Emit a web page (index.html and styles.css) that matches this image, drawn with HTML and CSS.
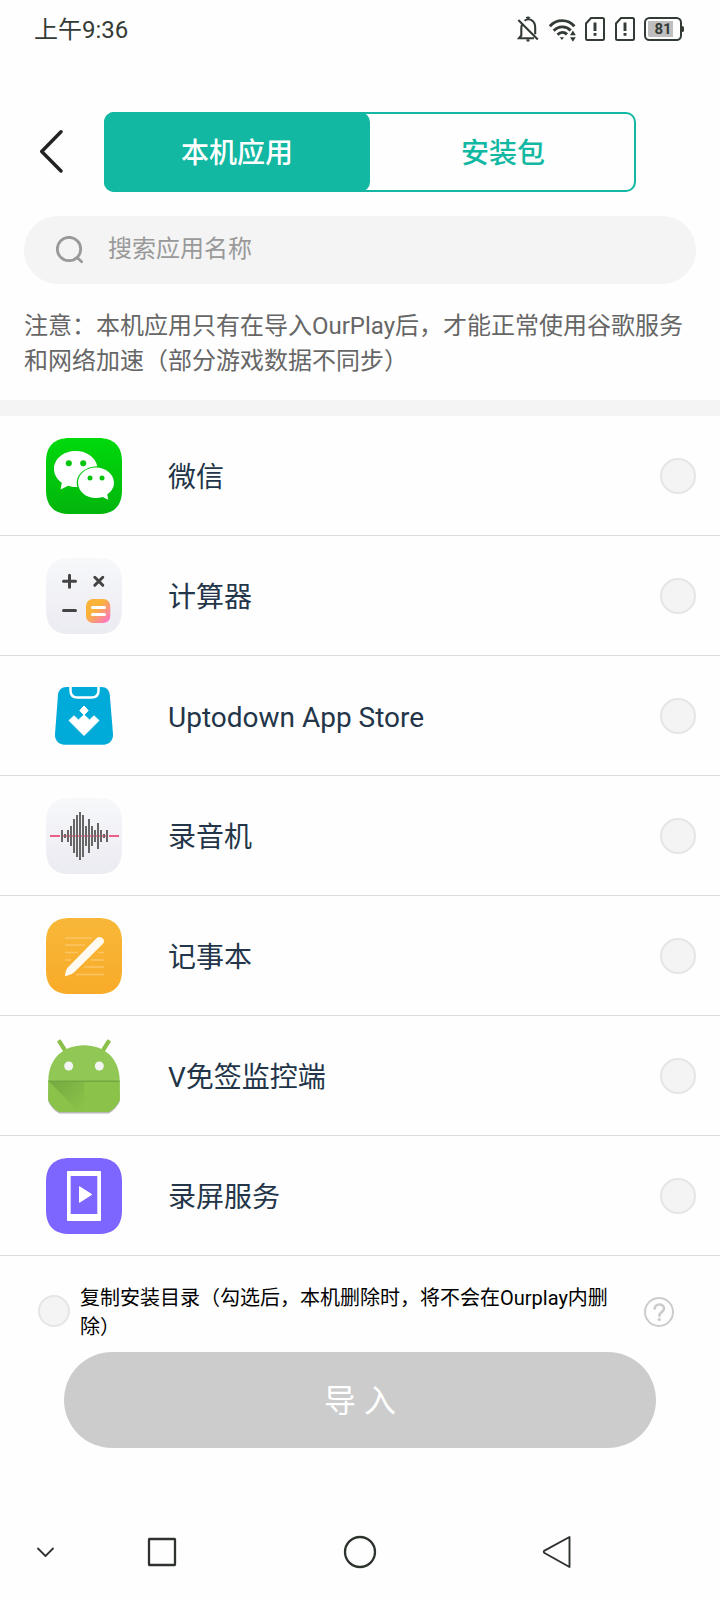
FILE: index.html
```html
<!DOCTYPE html>
<html lang="zh-CN">
<head>
<meta charset="utf-8">
<title>本机应用</title>
<link rel="stylesheet" href="styles.css">
</head>
<body>
<div class="status">
  <span class="clock">上午9:36</span>
  <div class="status-icons">
    <svg class="bell" width="22" height="28" viewBox="517 15 22 28" fill="none" stroke="#333b35" stroke-width="2.100"><path d="M522.300 24c-.8 1.500-1 3-1 4.500v7l-2.300 2.700h15M524.500 20.800c2-1.600 5.500-1.900 7.700-.2 2.300 1.600 3 4.200 3 7.200v6.500M518.300 20l19.500 19.500"/><path d="M526.300 18.300q1.700-1.500 3.400 0M526.500 40.400h3"/></svg>
    <svg class="wifi" width="28" height="26" viewBox="549 17 28 26" fill="none" stroke="#333b35" stroke-width="2.900"><path d="M549.800 26.300c6.500-7.600 18.300-7.600 24.600 0M553.700 30.800c4.500-5 12.300-5.200 17-.4M557.500 34.700c3-3 6.800-3 9.500-.3"/><g fill="#333b35" stroke="none"><path d="M559.800 37.300h4.200l-2.100 2.700zM570 35.300l2.900-4.900 2.900 4.900zM570 37.300h5.800l-2.900 4.400z"/></g></svg>
    <svg class="sim" width="20" height="24" viewBox="0 0 20 24" fill="none" stroke="#333b35" stroke-width="2"><path d="M6 1h11.500q1.500 0 1.500 1.500v19q0 1.500-1.500 1.500h-15Q1 23 1 21.500V6.500z"/><path d="M10 5.500v8.500M10 16v2.700" stroke-width="2.900"/></svg>
    <svg class="sim" width="20" height="24" viewBox="0 0 20 24" fill="none" stroke="#333b35" stroke-width="2"><path d="M6 1h11.500q1.500 0 1.500 1.500v19q0 1.500-1.500 1.500h-15Q1 23 1 21.500V6.500z"/><path d="M10 5.500v8.500M10 16v2.700" stroke-width="2.900"/></svg>
    <svg class="battery" width="40" height="24" viewBox="0 0 40 24"><rect x="1" y="1" width="36" height="22" rx="4.500" fill="none" stroke="#333b35" stroke-width="2"/><path d="M4 4h25v16H6q-2 0-2-2z" fill="#bfbfbf"/><path d="M38 9q2 0 2 1.500v3q0 1.500-2 1.500z" fill="#333b35"/><text x="19" y="17" text-anchor="middle" class="level">81</text></svg>
  </div>
</div>

<header class="header">
  <svg class="back" width="24" height="44" viewBox="0 0 24 44" fill="none" stroke="#222" stroke-width="3.400" stroke-linecap="round" stroke-linejoin="round"><path d="M21 1.800L1.700 21.500 21 41"/></svg>
  <div class="tabs"><div class="tab active">本机应用</div><div class="tab">安装包</div></div>
</header>

<div class="search">
  <svg width="28" height="28" viewBox="0 0 28 28" fill="none" stroke="#999" stroke-width="2.800"><circle cx="13" cy="13" r="11.700"/><path d="M21.300 21.700l4.300 4" stroke-linecap="round"/></svg>
  <span>搜索应用名称</span>
</div>
<p class="note">注意：本机应用只有在导入OurPlay后，才能正常使用谷歌服务和网络加速（部分游戏数据不同步）</p>

<main class="list">
  <div class="row">
    <svg class="icon" viewBox="0 0 76 76"><defs><linearGradient id="wx" x2="0" y2="1"><stop stop-color="#00da0c"/><stop offset="1" stop-color="#02b50c"/></linearGradient></defs><path fill="url(#wx)" d="M24 0h28c16 0 24 8 24 24v28c0 16-8 24-24 24H24C8 76 0 68 0 52V24C0 8 8 0 24 0z"/><path fill="#fff" d="M29.800 13C17.500 13 8 20.800 8 31c0 5.800 3.200 10.500 7.800 13.800L14.600 51.500l7.500-3.800c2.700.9 5.800 1.400 9.200 1.300C28.500 38 38 28.500 51.300 28.300 49.500 19.300 40.500 13 29.800 13z"/><path fill="#fff" d="M49.800 29.500C39.800 29.500 32 36.300 32 44.700S39.800 60 49.800 60c2.500 0 4.800-.4 6.800-1.100l5.700 2.800-1.100-5.300c4.200-2.800 6.800-7 6.800-11.700 0-8.400-8.200-15.200-18.200-15.200z"/><g fill="#03c60c"><circle cx="22.800" cy="25.200" r="3"/><circle cx="37.200" cy="25.200" r="3"/><circle cx="44" cy="40" r="2.500"/><circle cx="56" cy="40" r="2.500"/></g></svg>
    <span class="name">微信</span><i class="radio"></i>
  </div>
  <div class="row">
    <svg class="icon" viewBox="0 0 76 76"><defs><linearGradient id="pale" x2="0" y2="1"><stop stop-color="#f7f8fa"/><stop offset="1" stop-color="#ebebf2"/></linearGradient><linearGradient id="eq" x2="1" y2="1"><stop offset=".4" stop-color="#f9b23a"/><stop offset=".9" stop-color="#fd78c0"/></linearGradient></defs><path fill="url(#pale)" d="M24 0h28c16 0 24 8 24 24v28c0 16-8 24-24 24H24C8 76 0 68 0 52V24C0 8 8 0 24 0z"/><g stroke="#444" stroke-width="3" stroke-linecap="round"><path d="M17.500 23.300h12M23.500 17.300v12M17.500 52.600h12M48.800 19.300l8 8M56.800 19.300l-8 8"/></g><rect x="40" y="41" width="24.300" height="24" rx="7" fill="url(#eq)"/><path d="M46.500 49.500h12M46.500 56.500h12" stroke="#fff" stroke-width="3" stroke-linecap="round"/></svg>
    <span class="name">计算器</span><i class="radio"></i>
  </div>
  <div class="row">
    <svg class="icon" viewBox="0 0 76 76"><path fill="#00aad9" d="M20.500 9h35c5 0 8 3.500 8.300 8L67 56c.4 6-3.500 10.700-9.500 10.700h-39C12.500 66.700 8.600 62 9 56l3-39c.3-4.500 3.500-8 8.500-8z"/><path d="M24.500 8v4.500q0 7 7 7h14q7 0 7-7V8" fill="none" stroke="#fff" stroke-width="2.500"/><path fill="#fff" stroke="#fff" stroke-width="1" stroke-linejoin="round" d="M38 28l4.200 4.500L38 37l-4.200-4.500zM23 42.500l5-4.700 4.500 4.200 5.500-5.200 5.500 5.200 4.500-4.200 5 4.700L38 57.500z"/></svg>
    <span class="name">Uptodown App Store</span><i class="radio"></i>
  </div>
  <div class="row">
    <svg class="icon" viewBox="0 0 76 76"><path fill="url(#pale)" d="M24 0h28c16 0 24 8 24 24v28c0 16-8 24-24 24H24C8 76 0 68 0 52V24C0 8 8 0 24 0z"/><path stroke="#444" stroke-width="1.600" d="M16 32v12M19 36v4M22 32v12M25 28v20M28 21v34M31 17v42M34 14v48M37 17v42M40 28v20M43 21v34M46 28v20M49 32v12M52 25v26M55 32v12M58 36v4M61 32v12"/><path stroke="#ed5f87" stroke-width="1.800" d="M4 38h10M63 38h10"/><path stroke="#ed5f87" stroke-width="1.500" stroke-dasharray="1.500 1.500" d="M17 38h44"/></svg>
    <span class="name">录音机</span><i class="radio"></i>
  </div>
  <div class="row">
    <svg class="icon" viewBox="0 0 76 76"><defs><linearGradient id="memo" x2="0" y2="1"><stop stop-color="#f8b739"/><stop offset="1" stop-color="#f8ab28"/></linearGradient></defs><path fill="url(#memo)" d="M24 0h28c16 0 24 8 24 24v28c0 16-8 24-24 24H24C8 76 0 68 0 52V24C0 8 8 0 24 0z"/><path stroke="#fbc565" stroke-width="1.500" d="M19 20h27M19 27h20M19 34.500h13M52 34.500h6M19 42h6M45 42h13M38 49h20M30 56.500h28"/><path fill="#fffaf0" d="M50.500 20.200c3.200-3.200 9.800.9 6.700 5.200L28 54.600c-2.500 2-5.500 3-9 3.600.3-3.700 1-6.500 3-8.900z"/></svg>
    <span class="name">记事本</span><i class="radio"></i>
  </div>
  <div class="row">
    <svg class="icon" viewBox="0 0 76 76"><defs><linearGradient id="fold" gradientUnits="userSpaceOnUse" x1="4" y1="43" x2="38" y2="72"><stop stop-color="#6fa33c"/><stop offset="1" stop-color="#8bc34a"/></linearGradient></defs><path d="M2 54v9c3 6 6 9.500 11.300 12.500h49.400c5-3 8.300-6.500 11.300-12.500v-9z" fill="#999" opacity=".7"/><path d="M13 2.800l7.500 12M63 2.800l-7.500 12" stroke="#7ba553" stroke-width="4"/><path d="M12.700 2.300l7.500 12M63.300 2.300l-7.500 12" stroke="#8bc34a" stroke-width="3.600"/><path fill="#90c755" d="M2.300 43C2.300 21 17 7.300 38 7.300S73.700 21 73.700 43v19c-3 6-6 9-11 12H13.300c-5-3-8-6-11-12z"/><path fill="#8bc34a" d="M2.300 43.500h71.400V62c-3 6-6 9-11 12H13.300c-5-3-8-6-11-12z"/><path fill="url(#fold)" opacity=".8" d="M3 43.500h35V74h-5z"/><path d="M2.300 43.200h71.400" stroke="#73a743" stroke-width="1.500"/><circle cx="22.700" cy="28" r="4.500" fill="#f4f4f4"/><circle cx="53.300" cy="28" r="4.500" fill="#f4f4f4"/></svg>
    <span class="name">V免签监控端</span><i class="radio"></i>
  </div>
  <div class="row">
    <svg class="icon" viewBox="0 0 76 76"><path fill="#7d66ff" d="M24 0h28c16 0 24 8 24 24v28c0 16-8 24-24 24H24C8 76 0 68 0 52V24C0 8 8 0 24 0z"/><path fill="#fff" fill-rule="evenodd" d="M22 13h32q1 0 1 1v48q0 1-1 1H22q-1 0-1-1V14q0-1 1-1zm2.700 5v38h26.600V18z"/><path fill="#fff" stroke="#fff" stroke-linejoin="round" d="M33.500 28.700v15.600l12.200-7.800z"/></svg>
    <span class="name">录屏服务</span><i class="radio"></i>
  </div>
</main>

<footer class="footer">
  <div class="option">
    <i class="radio small"></i>
    <span class="option-text">复制安装目录（勾选后，本机删除时，将不会在Ourplay内删除）</span>
    <svg class="help" width="30" height="30" viewBox="0 0 30 30" fill="none" stroke="#ccc"><circle cx="15" cy="15" r="14" stroke-width="2"/><path d="M10.700 11.500c.3-5.300 9.300-5.400 9.300 0 0 3.500-4.600 3.200-4.600 7.300" stroke-width="2.700" stroke-linecap="round"/><circle cx="15.300" cy="22.500" r="1.600" fill="#ccc" stroke="none"/></svg>
  </div>
  <div class="import">导 入</div>
</footer>

<nav class="nav">
  <svg width="720" height="40" viewBox="0 0 720 40" fill="none" stroke="#2e332e" stroke-width="2.300" stroke-linejoin="round" stroke-linecap="round"><path d="M38 16.500l7.500 7.500 7.500-7.500" stroke-width="1.800"/><rect x="149" y="7" width="26" height="26" rx=".5"/><circle cx="360" cy="20" r="15"/><path d="M569.500 5v30L544.500 21q-1.500-1.200 0-2.400z" stroke-width="1.900"/></svg>
</nav>
</body>
</html>
```
FILE: styles.css
```css
* { box-sizing: border-box; }
body {
  margin: 0;
  width: 720px;
  height: 1600px;
  display: flex;
  flex-direction: column;
  background: #fefefe;
  font-family: Roboto, "Noto Sans CJK SC", sans-serif;
  overflow: hidden;
}
svg { display: block; flex: none; }
.status {
  height: 58px;
  flex: none;
  display: flex;
  justify-content: space-between;
  padding: 0 36px 0 34px;
  color: #333b35;
}
.clock { font-size: 24px; line-height: 60px; }
.status-icons { display: flex; align-items: center; }
.wifi { margin: 2px 8px 0 10px; }
.sim { margin-right: 10px; }
.sim + .battery { margin-left: -1px; }
.level { font: bold 15px Roboto, sans-serif; fill: #333b35; }
.header {
  flex: none;
  display: flex;
  align-items: center;
  margin-top: 54px;
  padding-left: 40px;
  height: 80px;
}
.tabs {
  display: flex;
  width: 532px;
  height: 80px;
  margin-left: 40px;
  border-radius: 10px;
  box-shadow: inset 0 0 0 2px #12b8a2;
}
.tab {
  flex: 1;
  height: 80px;
  text-align: center;
  font-size: 28px;
  font-weight: 500;
  line-height: 83px;
  color: #12b8a2;
}
.tab.active { background: #12b8a2; color: #fff; border-radius: 10px; }
.search {
  flex: none;
  display: flex;
  align-items: center;
  gap: 24px;
  height: 68px;
  margin: 24px 24px 0;
  padding-left: 32px;
  background: #f4f4f4;
  border-radius: 34px;
  color: #999;
  font-size: 24px;
  line-height: 34px;
}
.search span { padding-bottom: 2px; }
.note {
  flex: none;
  height: 116px;
  margin: 0;
  padding: 25px 24px 0;
  font-size: 24px;
  line-height: 35px;
  color: #666;
}
.list { flex: none; border-top: 16px solid #f4f4f4; }
.row {
  display: flex;
  align-items: center;
  height: 120px;
  padding: 0 24px 0 46px;
  border-bottom: 1px solid #ddd;
}
.icon { width: 76px; height: 76px; }
.name {
  flex: 1;
  margin-left: 46px;
  padding-top: 5px;
  font-size: 28px;
  line-height: 40px;
  color: #233548;
}
.radio {
  flex: none;
  width: 36px;
  height: 36px;
  border: 2px solid #e5e5e5;
  border-radius: 50%;
  background: #f4f4f4;
}
.radio.small { width: 32px; height: 32px; }
.footer { flex: none; height: 256px; padding-top: 27px; }
.option {
  display: flex;
  align-items: center;
  height: 56px;
  padding: 0 46px 0 38px;
}
.option-text {
  width: 530px;
  margin: 0 auto 0 10px;
  padding-top: 4px;
  font-size: 20px;
  line-height: 29px;
  color: #000;
}
.help { margin-top: 2px; }
.import {
  width: 592px;
  height: 96px;
  margin: 13px auto 0;
  border-radius: 48px;
  background: #ccc;
  color: #fff;
  font-size: 32px;
  line-height: 98px;
  text-align: center;
}
.nav { padding-top: 20px; }
```
